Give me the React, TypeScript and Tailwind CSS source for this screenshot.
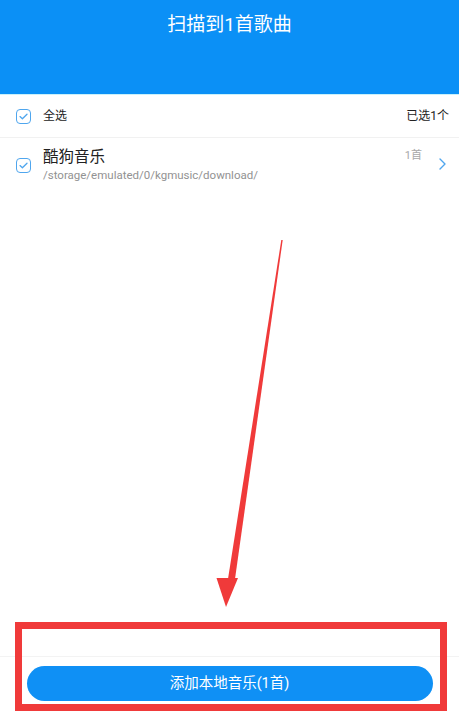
import React from "react";

const FONT = { fontFamily: 'Roboto, "Noto Sans CJK SC", sans-serif' };

function Check() {
  return (
    <div className="w-[15px] h-[15px] rounded-[4px] border-[1.5px] border-[#4fa6ee] flex items-center justify-center bg-white">
      <svg width="9" height="7" viewBox="0 0 9 7" fill="none">
        <path d="M1 3.6 L3.4 5.8 L8 1.2" stroke="#4fa6ee" strokeWidth="1.3" strokeLinecap="round" strokeLinejoin="round" />
      </svg>
    </div>
  );
}

export default function App() {
  return (
    <div className="relative w-[459px] h-[711px] bg-white flex flex-col overflow-hidden" style={FONT}>
      <div className="h-[94px] bg-[#0b90f6] flex justify-center pt-[12px]">
        <span className="text-white text-[19px] leading-[26px]">扫描到1首歌曲</span>
      </div>
      <div className="h-px bg-[#c9f1fb]" />
      <div className="h-[43px] flex items-center pl-[16px] pr-[10px] border-b border-[#f1f1f1]">
        <Check />
        <span className="ml-[12px] text-[12px] text-[#222]">全选</span>
        <span className="ml-auto text-[12px] text-[#222]">已选1个</span>
      </div>
      <div className="h-[55px] flex items-center pl-[16px] pr-[13px]">
        <Check />
        <div className="ml-[12px] flex flex-col -mt-[2px]">
          <span className="text-[15.5px] leading-[20px] text-[#222]">酷狗音乐</span>
          <span className="text-[11.5px] leading-[16px] text-[#929292]">/storage/emulated/0/kgmusic/download/</span>
        </div>
        <div className="ml-auto flex items-start h-full pt-[10px]">
          <span className="text-[11px] text-[#a8a8a8] mr-[17px]">1首</span>
          <svg className="mt-[10px]" width="7" height="12" viewBox="0 0 7 12" fill="none">
            <path d="M1 1 L6 6 L1 11" stroke="#4fa6ee" strokeWidth="1.4" strokeLinecap="round" strokeLinejoin="round" />
          </svg>
        </div>
      </div>
      <div className="flex-1" />
      <div className="h-px bg-[#f3f3f3]" />
      <div className="h-[54px] flex items-start justify-center pt-[9px]">
        <div className="w-[406px] h-[35px] rounded-full bg-[#0f90f5] flex items-center justify-center">
          <span className="text-white text-[14.5px]">添加本地音乐(1首)</span>
        </div>
      </div>

      {/* annotation overlays */}
      <svg className="absolute left-0 top-0 pointer-events-none" width="459" height="711">
        <polygon points="281.3,240 282.7,240 235,579 228,579" fill="#f03a3a" />
        <polygon points="216.5,578 238,578 226,607" fill="#f03a3a" />
      </svg>
      <div className="absolute left-[15px] top-[622px] w-[432px] h-[89px] border-[7px] border-[#f03a3a] pointer-events-none" />
    </div>
  );
}
